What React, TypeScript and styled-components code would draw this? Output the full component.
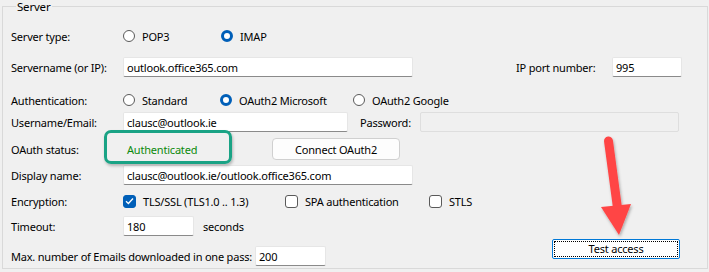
import React from 'react'
import styled, { createGlobalStyle } from 'styled-components'

const Global = createGlobalStyle`
  html, body {
    margin: 0;
    padding: 0;
    background: #f0f0f0;
  }
  body {
    font-family: "Segoe UI", "Noto Sans", sans-serif;
    font-size: 11px;
    letter-spacing: -0.2px;
    color: #000;
  }
`

const Page = styled.div`
  width: 709px;
  height: 272px;
  padding: 0 1px 0 2px;
  box-sizing: border-box;
`

const Group = styled.fieldset`
  position: relative;
  margin: 0;
  padding: 0 0 0 8px;
  height: 269px;
  box-sizing: border-box;
  border: 1px solid #d9d9d9;
  border-radius: 0;
`

const Legend = styled.legend`
  margin-left: 5px;
  padding: 0 2px 0 1px;
  line-height: 13px;
  font-size: 11.5px;
`

const Rows = styled.div`
  display: flex;
  flex-direction: column;
  padding-top: 12px;
`

const Row = styled.div<{ $gap?: number }>`
  display: flex;
  align-items: center;
  height: 22px;
  margin-top: ${p => p.$gap ?? 0}px;
`

const Label = styled.span<{ $w?: number }>`
  flex: none;
  width: ${p => p.$w ?? 112}px;
  white-space: nowrap;
`

const Cell = styled.div<{ $w: number }>`
  flex: none;
  width: ${p => p.$w}px;
  display: flex;
  align-items: center;
`

const Input = styled.div<{ $w: number; $disabled?: boolean }>`
  flex: none;
  width: ${p => p.$w}px;
  height: 20px;
  box-sizing: border-box;
  padding: 0 3px;
  display: flex;
  align-items: center;
  background: ${p => (p.$disabled ? '#f0f0f0' : '#fff')};
  border: 1px solid ${p => (p.$disabled ? '#dedede' : '#e6e6e6')};
  border-bottom-color: ${p => (p.$disabled ? '#dedede' : '#8a8a8a')};
  border-radius: 2px;
  white-space: nowrap;
`

const Option = styled.label`
  display: flex;
  align-items: center;
  gap: 7px;
  white-space: nowrap;
`

const Radio = styled.span<{ $on?: boolean }>`
  width: 12px;
  height: 12px;
  box-sizing: border-box;
  border-radius: 50%;
  border: ${p => (p.$on ? '3.5px solid #005fb8' : '1px solid #5a5a5a')};
  background: #fff;
`

const Check = styled.span<{ $on?: boolean }>`
  width: 13px;
  height: 13px;
  box-sizing: border-box;
  border-radius: 3px;
  border: 1px solid ${p => (p.$on ? '#005fb8' : '#5a5a5a')};
  background: ${p => (p.$on ? '#005fb8' : '#fff')};
  display: flex;
  align-items: center;
  justify-content: center;
`

const Status = styled.span`
  color: #0c8a0c;
  padding-left: 4px;
`

const Button = styled.button`
  width: 128px;
  height: 22px;
  font: inherit;
  letter-spacing: inherit;
  color: #000;
  background: #fdfdfd;
  border: 1px solid #d0d0d0;
  border-radius: 4px;
  padding: 0;
`

const FocusButton = styled.button`
  width: 128px;
  height: 20px;
  margin-top: -15px;
  font: inherit;
  letter-spacing: inherit;
  color: #000;
  background: #fff;
  border: 1px solid #0078d7;
  border-radius: 2px;
  padding: 1px;
  box-sizing: border-box;
  span {
    display: flex;
    align-items: center;
    justify-content: center;
    height: 100%;
    border: 1px dotted #000;
    box-sizing: border-box;
  }
`

const Spacer = styled.div`
  flex: 1;
`

const Highlight = styled.div`
  position: absolute;
  left: 101px;
  top: 117px;
  width: 128px;
  height: 34px;
  box-sizing: border-box;
  border: 3px solid #1aa385;
  border-radius: 7px;
  box-shadow: 1px 2px 3px rgba(0, 0, 0, 0.25);
  pointer-events: none;
`

const Arrow = styled.svg`
  position: absolute;
  left: 583px;
  top: 110px;
  overflow: visible;
  pointer-events: none;
`

const Tick = () => (
  <svg width="9" height="8" viewBox="0 0 9 8">
    <path d="M1 4.2 L3.4 6.5 L8 1.5" fill="none" stroke="#fff" strokeWidth="1.3" />
  </svg>
)

export default function App() {
  return (
    <Page>
      <Global />
      <Group>
        <Legend>Server</Legend>
        <Rows>
          <Row>
            <Label>Server type:</Label>
            <Cell $w={98}><Option><Radio />POP3</Option></Cell>
            <Option><Radio $on />IMAP</Option>
          </Row>
          <Row $gap={9}>
            <Label>Servername (or IP):</Label>
            <Input $w={290}>outlook.office365.com</Input>
            <Cell $w={103} />
            <Label $w={96}>IP port number:</Label>
            <Input $w={70}>995</Input>
          </Row>
          <Row $gap={11}>
            <Label>Authentication:</Label>
            <Cell $w={97}><Option><Radio />Standard</Option></Cell>
            <Cell $w={133}><Option><Radio $on />OAuth2 Microsoft</Option></Cell>
            <Option><Radio />OAuth2 Google</Option>
          </Row>
          <Row $gap={0}>
            <Label>Username/Email:</Label>
            <Input $w={225}>clausc@outlook.ie</Input>
            <Cell $w={12} />
            <Label $w={60}>Password:</Label>
            <Input $w={259} $disabled />
          </Row>
          <Row $gap={5}>
            <Label>OAuth status:</Label>
            <Cell $w={149}><Status>Authenticated</Status></Cell>
            <Button>Connect OAuth2</Button>
          </Row>
          <Row $gap={4}>
            <Label>Display name:</Label>
            <Input $w={290}>clausc@outlook.ie/outlook.office365.com</Input>
          </Row>
          <Row $gap={4}>
            <Label>Encryption:</Label>
            <Cell $w={162}><Option><Check $on><Tick /></Check>TLS/SSL (TLS1.0 .. 1.3)</Option></Cell>
            <Cell $w={144}><Option><Check />SPA authentication</Option></Cell>
            <Option><Check />STLS</Option>
          </Row>
          <Row $gap={3}>
            <Label>Timeout:</Label>
            <Input $w={71}>180</Input>
            <Cell $w={9} />
            <span>seconds</span>
          </Row>
          <Row $gap={8}>
            <Label $w={244}>Max. number of Emails downloaded in one pass:</Label>
            <Input $w={71}>200</Input>
            <Cell $w={226} />
            <FocusButton><span>Test access</span></FocusButton>
            <Spacer />
          </Row>
        </Rows>
        <Highlight />
        <Arrow width="60" height="120" viewBox="0 0 60 120">
          <defs>
            <filter id="sh" x="-50%" y="-20%" width="200%" height="150%">
              <feDropShadow dx="1" dy="2" stdDeviation="1.5" floodColor="#000" floodOpacity="0.3" />
            </filter>
          </defs>
          <g filter="url(#sh)" fill="#ff4545">
            <path d="M22.5 18 L31.5 85" stroke="#ff4545" strokeWidth="9" strokeLinecap="round" />
            <path d="M15 84 L45 81 L33 112 Z" />
          </g>
        </Arrow>
      </Group>
    </Page>
  )
}
